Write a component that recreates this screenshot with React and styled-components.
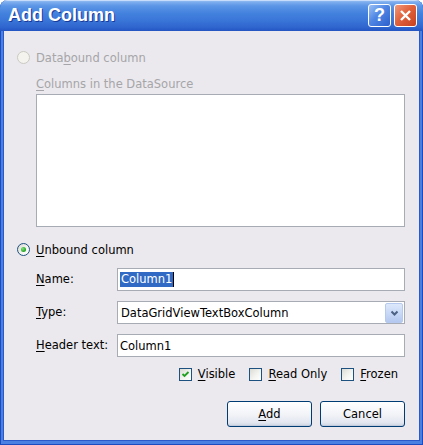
import React from "react";
import styled, { createGlobalStyle } from "styled-components";

const GlobalStyle = createGlobalStyle`
  html, body {
    margin: 0;
    padding: 0;
    background: #ffffff;
  }
  body {
    font-family: "DejaVu Sans", "Noto Sans", sans-serif;
    font-size: 11.5px;
    color: #000000;
  }
`;

const Window = styled.div`
  width: 423px;
  height: 445px;
  box-sizing: border-box;
  display: flex;
  flex-direction: column;
  background: #4a80e2;
  border-radius: 8px 8px 0 0;
  overflow: hidden;
  box-shadow: inset 1px 0 #1c4bbf, inset -1px 0 #1c4bbf, inset 0 -1px #1c4bbf;
`;

const TitleBar = styled.div`
  height: 31px;
  flex: none;
  display: flex;
  align-items: center;
  padding: 0 6px 0 8px;
  background: linear-gradient(
    to bottom,
    #a4c6f4 0px,
    #7eaeee 2px,
    #5b95e6 6px,
    #4482de 13px,
    #3a76d8 20px,
    #2f66cf 27px,
    #2455c2 31px
  );
  box-shadow: inset 0 1px #c7dcfa;
`;

const Title = styled.div`
  flex: 1;
  color: #ffffff;
  font-family: "Liberation Sans", Arial, sans-serif;
  font-weight: bold;
  font-size: 18px;
  text-shadow: 1px 1px 0 #1a3a99;
  padding-bottom: 1px;
`;

const CaptionButtons = styled.div`
  display: flex;
  gap: 3px;
`;

const CaptionButton = styled.div`
  width: 23px;
  height: 23px;
  box-sizing: border-box;
  border: 1px solid #ffffff;
  border-radius: 3px;
  display: flex;
  align-items: center;
  justify-content: center;
  color: #ffffff;
  font-family: "Liberation Sans", Arial, sans-serif;
  font-weight: bold;
  font-size: 18px;
  background: ${(p) =>
    p.$close
      ? "linear-gradient(135deg, #f0997b 0%, #e0623c 45%, #c7411e 100%)"
      : "linear-gradient(135deg, #9ac0f6 0%, #4f86e4 45%, #2d5fcb 100%)"};
`;

const Body = styled.div`
  flex: 1;
  margin: 0 3px 4px;
  box-sizing: border-box;
  background: #ebe9ed;
  border: 1px solid #2b5ac8;
  border-top: none;
  padding: 20px 14px 0 13px;
  display: flex;
  flex-direction: column;
`;

const OptionRow = styled.label`
  display: flex;
  align-items: center;
  gap: 6px;
  height: 13px;
  margin-top: ${(p) => p.$top || 0}px;
  color: ${(p) => (p.$disabled ? "#a6a5a9" : "#000000")};
`;

const Radio = styled.span`
  width: 13px;
  height: 13px;
  box-sizing: border-box;
  border-radius: 50%;
  flex: none;
  border: 1px solid ${(p) => (p.$disabled ? "#cbc9c2" : "#1c5180")};
  background: ${(p) =>
    p.$disabled
      ? "#f4f3ee"
      : "linear-gradient(135deg, #d9d8d1 0%, #f6f6f3 60%, #ffffff 100%)"};
  display: flex;
  align-items: center;
  justify-content: center;

  &::after {
    content: "";
    display: ${(p) => (p.$checked ? "block" : "none")};
    width: 5px;
    height: 5px;
    border-radius: 50%;
    background: radial-gradient(circle at 35% 35%, #7fe37b, #21a121 70%);
  }
`;

const Indented = styled.div`
  margin-left: 19px;
`;

const SubLabel = styled(Indented)`
  margin-top: 14px;
  height: 13px;
  line-height: 13px;
  color: #a6a5a9;
`;

const ListBox = styled(Indented)`
  margin-top: 3px;
  height: 133px;
  box-sizing: border-box;
  background: #ffffff;
  border: 1px solid #a7acb4;
`;

const FormGrid = styled(Indented)`
  margin-top: 12px;
  display: grid;
  grid-template-columns: 81px 1fr;
  grid-auto-rows: 23px;
  row-gap: 10px;
  align-items: center;
`;

const FieldLabel = styled.span`
  line-height: 13px;
`;

const TextBox = styled.div`
  height: 23px;
  box-sizing: border-box;
  border: 1px solid #a7acb4;
  background: #ffffff;
  display: flex;
  align-items: center;
  padding: 0 2px;
`;

const Selected = styled.span`
  background: #316ac5;
  color: #ffffff;
  line-height: 15px;
  padding: 0 1px 0 1px;
  border-right: 1px solid #000000;
`;

const ComboBox = styled(TextBox)`
  padding: 0 1px 0 3px;
  justify-content: space-between;
`;

const DropButton = styled.span`
  width: 18px;
  height: 20px;
  box-sizing: border-box;
  border: 1px solid #b6c9ee;
  border-radius: 2px;
  background: linear-gradient(to bottom, #dde8fb 0%, #c4d5f5 60%, #b4c8ef 100%);
  display: flex;
  align-items: center;
  justify-content: center;
`;

const CheckRow = styled.div`
  margin-top: 10px;
  display: flex;
  justify-content: flex-end;
  gap: 14px;
  padding-right: 7px;
`;

const CheckItem = styled.label`
  display: flex;
  align-items: center;
  gap: 6px;
  height: 14px;
`;

const CheckBox = styled.span`
  width: 13px;
  height: 13px;
  box-sizing: border-box;
  border: 1px solid #1c5180;
  background: linear-gradient(135deg, #dcdcd6 0%, #f5f5f2 60%, #ffffff 100%);
  display: flex;
  align-items: center;
  justify-content: center;
`;

const ButtonRow = styled.div`
  margin-top: 20px;
  display: flex;
  justify-content: flex-end;
  gap: 8px;
`;

const PushButton = styled.button`
  width: 85px;
  height: 26px;
  box-sizing: border-box;
  border: 1px solid #003c74;
  border-radius: 3px;
  background: linear-gradient(to bottom, #ffffff 0%, #f3f4f8 50%, #e3e7f0 85%, #cdd5e3 100%);
  font-family: "DejaVu Sans", "Noto Sans", sans-serif;
  font-size: 11.5px;
  color: #000000;
  padding: 0;
  box-shadow: inset 0 -1px #c2cbdc;
`;

const Key = styled.span`
  text-decoration: underline;
  text-underline-offset: 2px;
`;

const Check = () => (
  <svg width="9" height="9" viewBox="0 0 9 9">
    <polyline
      points="1.5,4 3.5,6 7.5,2"
      fill="none"
      stroke="#21a121"
      strokeWidth="1.8"
    />
  </svg>
);

const Chevron = () => (
  <svg width="9" height="6" viewBox="0 0 9 6">
    <polyline
      points="1.5,1.5 4.5,4.5 7.5,1.5"
      fill="none"
      stroke="#4d6185"
      strokeWidth="2"
    />
  </svg>
);

const CloseGlyph = () => (
  <svg width="13" height="13" viewBox="0 0 13 13">
    <path d="M2 2 L11 11 M11 2 L2 11" stroke="#ffffff" strokeWidth="2.4" />
  </svg>
);

export default function App() {
  return (
    <>
      <GlobalStyle />
      <Window>
        <TitleBar>
          <Title>Add Column</Title>
          <CaptionButtons>
            <CaptionButton>?</CaptionButton>
            <CaptionButton $close>
              <CloseGlyph />
            </CaptionButton>
          </CaptionButtons>
        </TitleBar>
        <Body>
          <OptionRow $disabled>
            <Radio $disabled />
            <span>
              Data<Key>b</Key>ound column
            </span>
          </OptionRow>
          <SubLabel>
            <Key>C</Key>olumns in the DataSource
          </SubLabel>
          <ListBox />
          <OptionRow $top={16}>
            <Radio $checked />
            <span>
              <Key>U</Key>nbound column
            </span>
          </OptionRow>
          <FormGrid>
            <FieldLabel>
              <Key>N</Key>ame:
            </FieldLabel>
            <TextBox>
              <Selected>Column1</Selected>
            </TextBox>
            <FieldLabel>
              <Key>T</Key>ype:
            </FieldLabel>
            <ComboBox>
              <span>DataGridViewTextBoxColumn</span>
              <DropButton>
                <Chevron />
              </DropButton>
            </ComboBox>
            <FieldLabel>
              <Key>H</Key>eader text:
            </FieldLabel>
            <TextBox>
              <span>Column1</span>
            </TextBox>
          </FormGrid>
          <CheckRow>
            <CheckItem>
              <CheckBox>
                <Check />
              </CheckBox>
              <span>
                <Key>V</Key>isible
              </span>
            </CheckItem>
            <CheckItem>
              <CheckBox />
              <span>
                <Key>R</Key>ead Only
              </span>
            </CheckItem>
            <CheckItem>
              <CheckBox />
              <span>
                <Key>F</Key>rozen
              </span>
            </CheckItem>
          </CheckRow>
          <ButtonRow>
            <PushButton>
              <Key>A</Key>dd
            </PushButton>
            <PushButton>Cancel</PushButton>
          </ButtonRow>
        </Body>
      </Window>
    </>
  );
}
